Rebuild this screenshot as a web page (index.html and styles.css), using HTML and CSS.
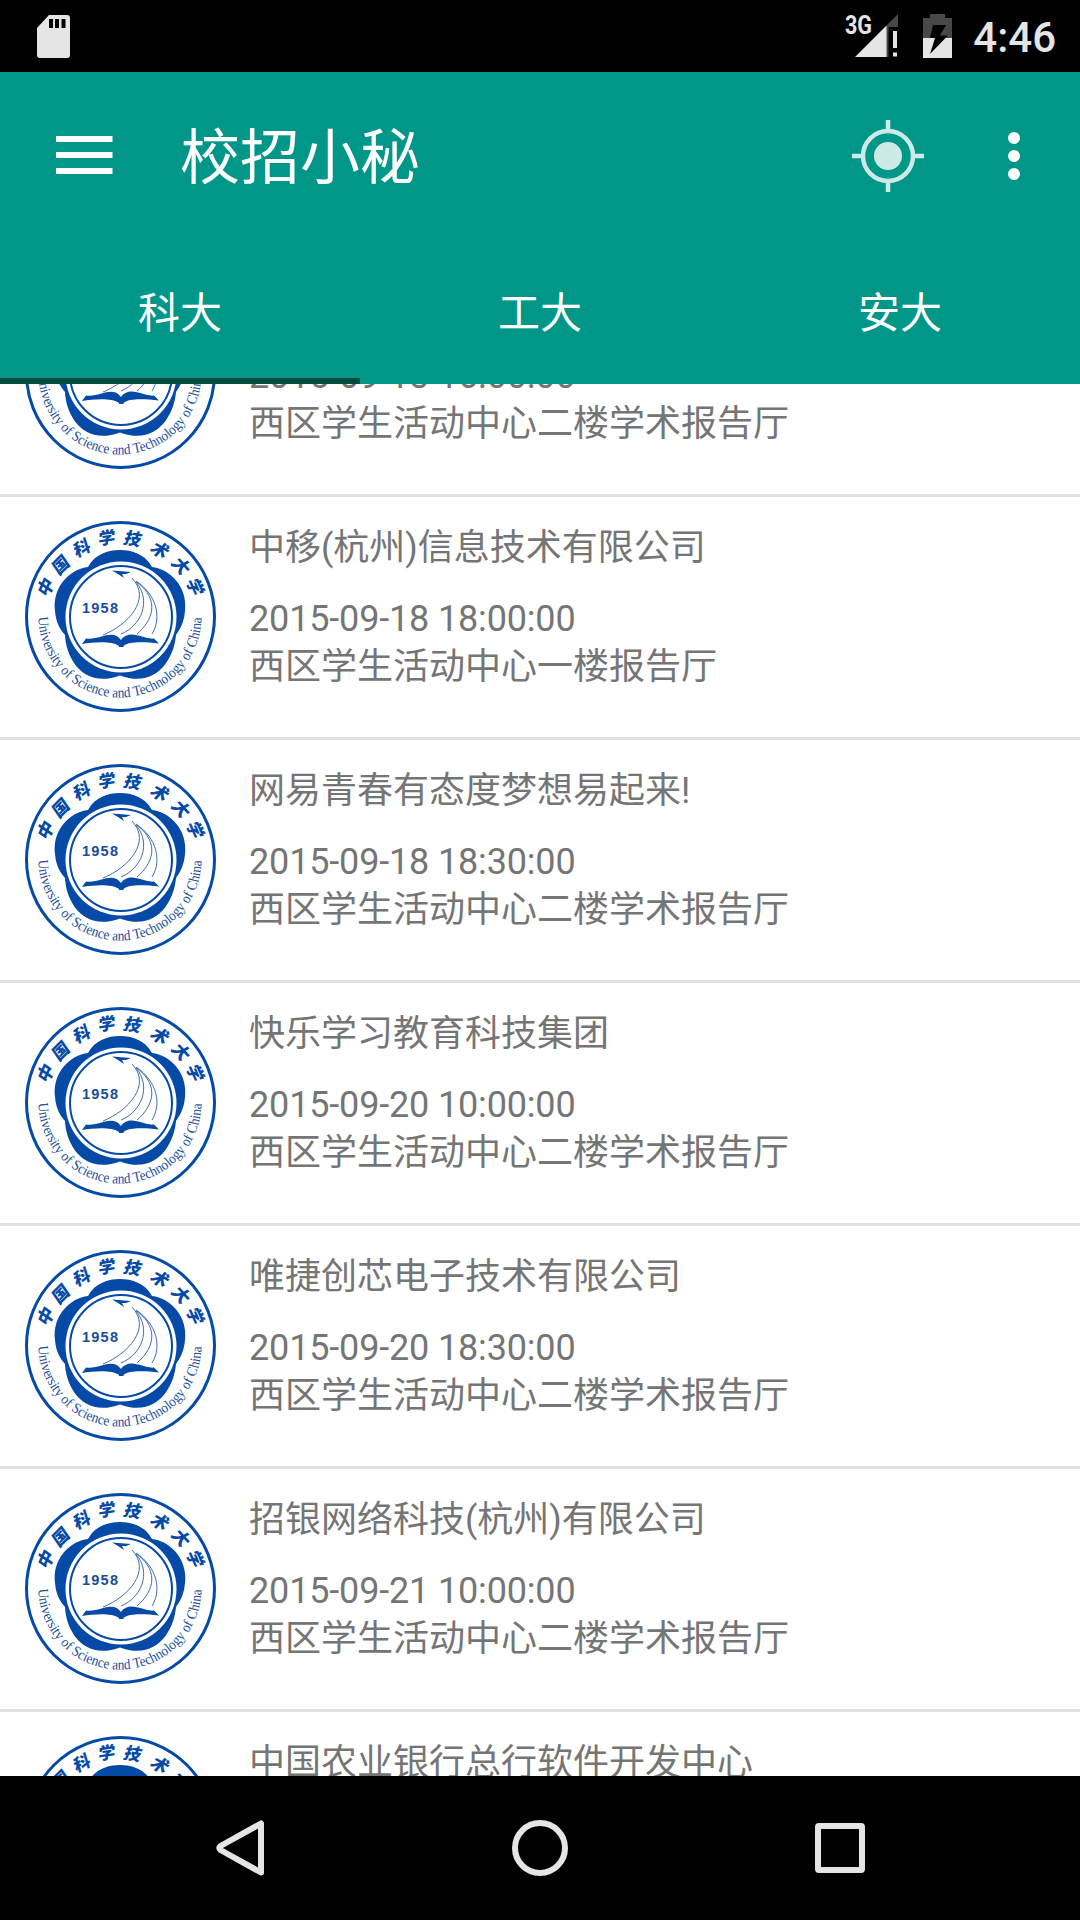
FILE: index.html
```html
<!DOCTYPE html>
<html lang="zh-CN">
<head>
<meta charset="utf-8">
<title>校招小秘</title>
<link rel="stylesheet" href="styles.css">
</head>
<body>
<svg class="defs" aria-hidden="true">
  <symbol id="seal" viewBox="0 0 192 192">
    <circle class="seal-rim" cx="96.5" cy="95.500" r="94"/>
    <path class="seal-fill" d="M64 46C71 33 84 29 96 29S121 33 128 46C146 48 164 66 161 90C160 102 156 108 152 114C150 138 132 168 96 154.500C60 168 42 138 41 114C36 108 32 102 31 90C28 66 46 48 64 46Z"/>
    <circle class="seal-disc" cx="97" cy="96" r="55.500"/>
    <circle class="seal-ring" cx="97" cy="96" r="51"/>
    <path class="seal-fill" d="M88 49.500L107 51L102 53L98 53L100 57L94 53Z"/>
    <path class="seal-line" d="M108 57C128 78 104 104 79 114M112 61C128 80 117 105 97 113M113 61C137 80 128 100 113 113M112 60C133 74 138 97 128 113"/>
    <path class="seal-fill" d="M58 123L62 117.500C75 120 88 107 97 119C106 107 120 119 130 117.500L135 122.500C121 121 105 120 99.500 125V126H95V125C88 120 71 121 58 123Z"/>
    <text class="seal-year" x="58" y="92" textLength="36">1958</text>
    <path id="lower-arc" class="seal-path" d="M14.500 95A81.500 81.500 0 0 0 177.500 95"/>
    <text class="seal-english"><textPath href="#lower-arc" startOffset="1" textLength="253" lengthAdjust="spacingAndGlyphs">University of Science and Technology of China</textPath></text>
    <g class="seal-chinese">
      <text transform="translate(22 66) rotate(-66) skewX(-10)" y="6">中</text>
      <text transform="translate(37 44) rotate(-45) skewX(-10)" y="6">国</text>
      <text transform="translate(58 27) rotate(-27) skewX(-10)" y="6">科</text>
      <text transform="translate(83 17) rotate(-8) skewX(-10)" y="6">学</text>
      <text transform="translate(109 18) rotate(10) skewX(-10)" y="6">技</text>
      <text transform="translate(136 29) rotate(30) skewX(-10)" y="6">术</text>
      <text transform="translate(157 45) rotate(48) skewX(-10)" y="6">大</text>
      <text transform="translate(171 66) rotate(66) skewX(-10)" y="6">学</text>
    </g>
  </symbol>
</svg>
<div class="screen">
  <header class="status">
    <svg class="sd" width="36" height="44" viewBox="0 0 36 44"><path fill="#e5e5e5" d="M13 0H31Q34 0 34 3V40Q34 43 31 43H4Q1 43 1 40V13Z"/><path d="M13 4h4v9h-4zM19 4h4v9h-4zM25.500 4h4v9h-4z"/></svg>
    <svg class="signal" width="56" height="46" viewBox="844 13 56 46"><text class="net" x="845" y="33.500" textLength="27" lengthAdjust="spacingAndGlyphs">3G</text><path fill="#484848" d="M886 26L898 14V27H888.500V57H886Z"/><path fill="#e5e5e5" d="M855 57L886.500 25.500V57ZM893 31h4v17h-4zM893 52.500h4v4h-4z"/></svg>
    <svg class="battery" width="30" height="46" viewBox="923 13 30 46"><path fill="#484848" d="M923 18h7v-4h15v4h7v20h-29z"/><path fill="#e5e5e5" d="M923 38h29v20h-29z"/><path d="M933 25H946L940 35.500H948L930 54L935 38H930Z"/></svg>
    <span class="clock">4:46</span>
  </header>
  <div class="appbar">
    <div class="toolbar">
      <svg class="menu" width="58" height="42" viewBox="55 134 58 42"><path fill="#fff" d="M56 136h56.500v6h-56.500zM56 152h56.500v6h-56.500zM56 168h56.500v6h-56.500z"/></svg>
      <h1>校招小秘</h1>
      <svg class="locate" width="74" height="74" viewBox="-37 -37 74 74"><circle r="14" fill="#cceae7"/><circle r="25" fill="none" stroke="#cceae7" stroke-width="4.500"/><path d="M0 -36V-26M0 36V26M-36 0H-26M36 0H26" stroke="#cceae7" stroke-width="4.500"/></svg>
      <svg class="more" width="12" height="48" viewBox="0 0 12 48"><g fill="#fff"><circle cx="6" cy="6" r="6"/><circle cx="6" cy="24" r="6"/><circle cx="6" cy="42" r="6"/></g></svg>
    </div>
    <nav class="tabs"><div class="tab active">科大</div><div class="tab">工大</div><div class="tab">安大</div></nav>
  </div>
  <main class="viewport">
    <ul class="list">
      <li class="row"><svg class="logo"><use href="#seal"/></svg><div class="info"><p class="name"></p><p class="date">2015-09-18 16:00:00</p><p class="place">西区学生活动中心二楼学术报告厅</p></div></li>
      <li class="row"><svg class="logo"><use href="#seal"/></svg><div class="info"><p class="name">中移(杭州)信息技术有限公司</p><p class="date">2015-09-18 18:00:00</p><p class="place">西区学生活动中心一楼报告厅</p></div></li>
      <li class="row"><svg class="logo"><use href="#seal"/></svg><div class="info"><p class="name">网易青春有态度梦想易起来!</p><p class="date">2015-09-18 18:30:00</p><p class="place">西区学生活动中心二楼学术报告厅</p></div></li>
      <li class="row"><svg class="logo"><use href="#seal"/></svg><div class="info"><p class="name">快乐学习教育科技集团</p><p class="date">2015-09-20 10:00:00</p><p class="place">西区学生活动中心二楼学术报告厅</p></div></li>
      <li class="row"><svg class="logo"><use href="#seal"/></svg><div class="info"><p class="name">唯捷创芯电子技术有限公司</p><p class="date">2015-09-20 18:30:00</p><p class="place">西区学生活动中心二楼学术报告厅</p></div></li>
      <li class="row"><svg class="logo"><use href="#seal"/></svg><div class="info"><p class="name">招银网络科技(杭州)有限公司</p><p class="date">2015-09-21 10:00:00</p><p class="place">西区学生活动中心二楼学术报告厅</p></div></li>
      <li class="row"><svg class="logo"><use href="#seal"/></svg><div class="info"><p class="name">中国农业银行总行软件开发中心</p></div></li>
    </ul>
  </main>
  <footer class="navbar">
    <svg width="60" height="60" viewBox="210 1818 60 60"><path d="M261 1823.500V1872.500L220.500 1850Q218 1848 220.500 1846Z"/></svg>
    <svg width="60" height="60" viewBox="-30 -30 60 60"><circle r="25"/></svg>
    <svg width="60" height="60" viewBox="-30 -30 60 60"><rect x="-22" y="-22" width="44" height="44" rx="1"/></svg>
  </footer>
</div>
</body>
</html>
```
FILE: styles.css
```css
* { box-sizing: border-box; }
body { margin: 0; font-family: Roboto, "Noto Sans CJK SC", sans-serif; background: #000; }
h1, p, ul { margin: 0; padding: 0; font-weight: 400; }
svg { display: block; flex: none; }
.defs { position: absolute; width: 0; height: 0; }
.screen { width: 1080px; height: 1920px; display: flex; flex-direction: column; overflow: hidden; }

.status { height: 72px; flex: none; background: #000; display: flex; align-items: flex-start; padding: 13px 24px 0 36px; }
.sd { margin-top: 2px; }
.signal { margin-left: auto; }
.battery { margin-left: 23px; }
.net { font: 700 25px Roboto, sans-serif; fill: #e5e5e5; }
.clock { width: 103px; text-align: right; color: #e5e5e5; font-size: 42px; font-weight: 500; line-height: 50px; white-space: nowrap; }

.appbar { height: 312px; flex: none; background: #009688; color: #fff; }
.toolbar { height: 168px; display: flex; align-items: center; padding: 0 60px 0 55px; }
.menu { margin-top: -2px; }
.toolbar h1 { margin-left: 67px; padding-top: 6px; font-size: 60px; line-height: 80px; }
.locate { margin-left: auto; }
.more { margin-left: 83px; }
.tabs { height: 144px; display: grid; grid-template-columns: repeat(3, 1fr); }
.tab { font-size: 42px; line-height: 148px; text-align: center; border-bottom: 6px solid transparent; height: 144px; }
.tab.active { border-bottom-color: #004b40; }

.viewport { height: 1392px; flex: none; background: #fff; overflow: hidden; }
.list { list-style: none; margin-top: -130px; }
.row { height: 243px; border-bottom: 3px solid #e0e0e0; display: flex; padding: 24px; gap: 33px; }
.logo { width: 192px; height: 192px; }
.info { padding-top: 3px; color: #757575; font-size: 36px; line-height: 48px; white-space: nowrap; }
.name { height: 48px; }
.date { margin-top: 23px; letter-spacing: -0.16px; }

.seal-rim { fill: #fff; stroke: #044aa6; stroke-width: 3; }
.seal-fill { fill: #044aa6; }
.seal-disc { fill: #fff; }
.seal-ring { fill: none; stroke: #044aa6; stroke-width: 2; }
.seal-line { fill: none; stroke: #2a5ca8; stroke-width: 0.9; }
.seal-path { fill: none; }
.seal-year { font: 700 14.5px "Liberation Sans", sans-serif; fill: #1a4c98; }
.seal-english { font: 14.5px "Liberation Serif", serif; fill: #224f9c; }
.seal-chinese { font: 900 17px "Noto Sans CJK SC", sans-serif; fill: #044aa6; text-anchor: middle; }

.navbar { height: 144px; flex: none; background: #000; display: flex; justify-content: space-between; align-items: center; padding: 0 210px; }
.navbar svg { fill: none; stroke: #e5e5e5; stroke-width: 6; stroke-linejoin: round; }
```
